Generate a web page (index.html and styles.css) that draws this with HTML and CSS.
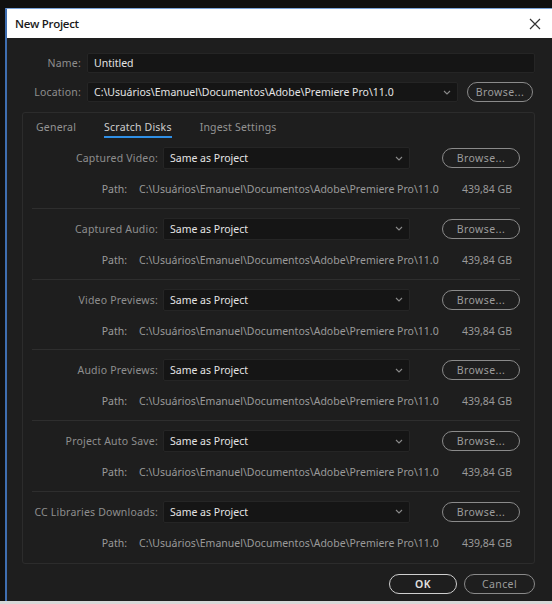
FILE: index.html
```html
<!DOCTYPE html>
<html>
<head>
<meta charset="utf-8">
<link rel="stylesheet" href="styles.css">
</head>
<body>
<div class="frame">
  <div class="dialog">
    <div class="titlebar">
      <span class="title">New Project</span>
      <svg class="close" width="12" height="12" viewBox="0 0 12 12"><path d="M1 1L11 11M11 1L1 11" stroke="#333" stroke-width="1.2" fill="none"/></svg>
    </div>
    <div class="content">
      <div class="toprow">
        <span class="label">Name:</span>
        <div class="field name">Untitled</div>
      </div>
      <div class="toprow">
        <span class="label">Location:</span>
        <div class="field select loc"><span>C:\Usuários\Emanuel\Documentos\Adobe\Premiere Pro\11.0</span><svg class="chev" width="8" height="5" viewBox="0 0 8 5"><path d="M1 1L4 4L7 1" stroke="#8a8a8a" stroke-width="1.1" fill="none"/></svg></div>
        <div class="btn">Browse...</div>
      </div>
      <div class="panel">
        <div class="tabs">
          <span class="tab">General</span>
          <span class="tab active">Scratch Disks</span>
          <span class="tab">Ingest Settings</span>
        </div>
        <div class="section">
          <div class="selrow"><span class="slabel">Captured Video:</span><div class="field select dd"><span>Same as Project</span><svg class="chev" width="8" height="5" viewBox="0 0 8 5"><path d="M1 1L4 4L7 1" stroke="#8a8a8a" stroke-width="1.1" fill="none"/></svg></div><div class="btn sbtn">Browse...</div></div>
          <div class="pathrow"><span class="plabel">Path:</span><span class="ptext">C:\Usuários\Emanuel\Documentos\Adobe\Premiere Pro\11.0</span><span class="psize">439,84 GB</span></div>
        </div>
        <div class="section">
          <div class="selrow"><span class="slabel">Captured Audio:</span><div class="field select dd"><span>Same as Project</span><svg class="chev" width="8" height="5" viewBox="0 0 8 5"><path d="M1 1L4 4L7 1" stroke="#8a8a8a" stroke-width="1.1" fill="none"/></svg></div><div class="btn sbtn">Browse...</div></div>
          <div class="pathrow"><span class="plabel">Path:</span><span class="ptext">C:\Usuários\Emanuel\Documentos\Adobe\Premiere Pro\11.0</span><span class="psize">439,84 GB</span></div>
        </div>
        <div class="section">
          <div class="selrow"><span class="slabel">Video Previews:</span><div class="field select dd"><span>Same as Project</span><svg class="chev" width="8" height="5" viewBox="0 0 8 5"><path d="M1 1L4 4L7 1" stroke="#8a8a8a" stroke-width="1.1" fill="none"/></svg></div><div class="btn sbtn">Browse...</div></div>
          <div class="pathrow"><span class="plabel">Path:</span><span class="ptext">C:\Usuários\Emanuel\Documentos\Adobe\Premiere Pro\11.0</span><span class="psize">439,84 GB</span></div>
        </div>
        <div class="section">
          <div class="selrow"><span class="slabel">Audio Previews:</span><div class="field select dd"><span>Same as Project</span><svg class="chev" width="8" height="5" viewBox="0 0 8 5"><path d="M1 1L4 4L7 1" stroke="#8a8a8a" stroke-width="1.1" fill="none"/></svg></div><div class="btn sbtn">Browse...</div></div>
          <div class="pathrow"><span class="plabel">Path:</span><span class="ptext">C:\Usuários\Emanuel\Documentos\Adobe\Premiere Pro\11.0</span><span class="psize">439,84 GB</span></div>
        </div>
        <div class="section">
          <div class="selrow"><span class="slabel">Project Auto Save:</span><div class="field select dd"><span>Same as Project</span><svg class="chev" width="8" height="5" viewBox="0 0 8 5"><path d="M1 1L4 4L7 1" stroke="#8a8a8a" stroke-width="1.1" fill="none"/></svg></div><div class="btn sbtn">Browse...</div></div>
          <div class="pathrow"><span class="plabel">Path:</span><span class="ptext">C:\Usuários\Emanuel\Documentos\Adobe\Premiere Pro\11.0</span><span class="psize">439,84 GB</span></div>
        </div>
        <div class="section last">
          <div class="selrow"><span class="slabel">CC Libraries Downloads:</span><div class="field select dd"><span>Same as Project</span><svg class="chev" width="8" height="5" viewBox="0 0 8 5"><path d="M1 1L4 4L7 1" stroke="#8a8a8a" stroke-width="1.1" fill="none"/></svg></div><div class="btn sbtn">Browse...</div></div>
          <div class="pathrow"><span class="plabel">Path:</span><span class="ptext">C:\Usuários\Emanuel\Documentos\Adobe\Premiere Pro\11.0</span><span class="psize">439,84 GB</span></div>
        </div>
      </div>
      <div class="footer">
        <div class="btn ok">OK</div>
        <div class="btn cancel">Cancel</div>
      </div>
    </div>
  </div>
</div>
</body>
</html>
```
FILE: styles.css
```css
* { box-sizing: border-box; }
html, body { margin: 0; padding: 0; }
body {
  background: #d8d8d8;
  width: 552px;
  height: 604px;
  overflow: hidden;
  font-family: "Noto Sans", "Open Sans", sans-serif;
  font-size: 10.5px;
}
.frame {
  height: 601px;
  background: #101010;
  padding: 8px 0 0 5px;
}
.dialog {
  height: 100%;
  border-left: 2px solid #3f6eb0;
  border-top: 1px solid #7aa3d8;
  background: #1e1e1e;
  display: flex;
  flex-direction: column;
}
.titlebar {
  height: 29px;
  background: #ffffff;
  display: flex;
  align-items: center;
  justify-content: space-between;
  padding: 0 11px 0 8px;
}
.title {
  font-family: "Open Sans", "Noto Sans", sans-serif;
  font-size: 11.5px;
  font-weight: 600;
  color: #1a1a1a;
  letter-spacing: -0.3px;
}
.close { display: block; }
.content {
  flex: 1;
  padding: 15px 17px 0 15px;
  display: flex;
  flex-direction: column;
}
.toprow {
  display: flex;
  align-items: center;
  height: 20px;
  margin-bottom: 9px;
}
.label {
  width: 59px;
  text-align: right;
  color: #8e8e8e;
  margin-right: 6px;
  letter-spacing: 0.2px;
}
.field {
  height: 20px;
  background: #151515;
  border: 1px solid #252525;
  border-radius: 2px;
  color: #e4e4e4;
  display: flex;
  align-items: center;
  padding: 0 6px;
}
.name { flex: 1; }
.select { justify-content: space-between; }
.loc { width: 371px; }
.chev { display: block; }
.btn {
  height: 20px;
  border: 1.5px solid #8a8a8a;
  border-radius: 10px;
  color: #9c9c9c;
  display: flex;
  align-items: center;
  justify-content: center;
  letter-spacing: 0.4px;
}
.toprow .btn { width: 66px; margin-left: 9px; }
.panel {
  margin-top: 1px;
  height: 452px;
  flex: none;
  border: 1px solid #2c2c2c;
  border-radius: 3px;
  padding: 0 14px 0 9px;
  display: flex;
  flex-direction: column;
}
.tabs {
  display: flex;
  flex: none;
  height: 25px;
  align-items: center;
  padding-left: 4px;
  padding-top: 2px;
}
.tab {
  color: #939393;
  margin-right: 28px;
  position: relative;
  letter-spacing: 0.2px;
}
.tab.active { color: #cfcfcf; }
.tab.active::after {
  content: "";
  position: absolute;
  left: 0;
  right: 0;
  bottom: -4px;
  height: 2px;
  background: #2f8fe6;
}
.section {
  border-bottom: 1px solid #2e2e2e;
  height: 70.8px;
  flex: none;
  display: flex;
  flex-direction: column;
  padding-top: 9px;
}
.section.last { border-bottom: none; }
.selrow {
  display: flex;
  align-items: center;
  height: 22px;
}
.slabel {
  width: 126px;
  text-align: right;
  color: #8e8e8e;
  margin-right: 5px;
  letter-spacing: 0.2px;
  white-space: nowrap;
}
.dd { width: 247px; height: 22px; }
.sbtn { width: 78px; margin-left: auto; }
.pathrow {
  display: flex;
  align-items: center;
  margin-top: 12px;
  height: 16px;
  color: #9a9a9a;
}
.plabel {
  width: 95px;
  text-align: right;
  margin-right: 12px;
}
.ptext { white-space: nowrap; }
.psize { margin-left: auto; margin-right: 8px; }
.footer {
  display: flex;
  justify-content: flex-end;
  margin-top: 10px;
  gap: 7px;
}
.ok {
  width: 68px;
  border-color: #cfcfcf;
  color: #e2e2e2;
  font-weight: 600;
}
.cancel { width: 71px; }
```
